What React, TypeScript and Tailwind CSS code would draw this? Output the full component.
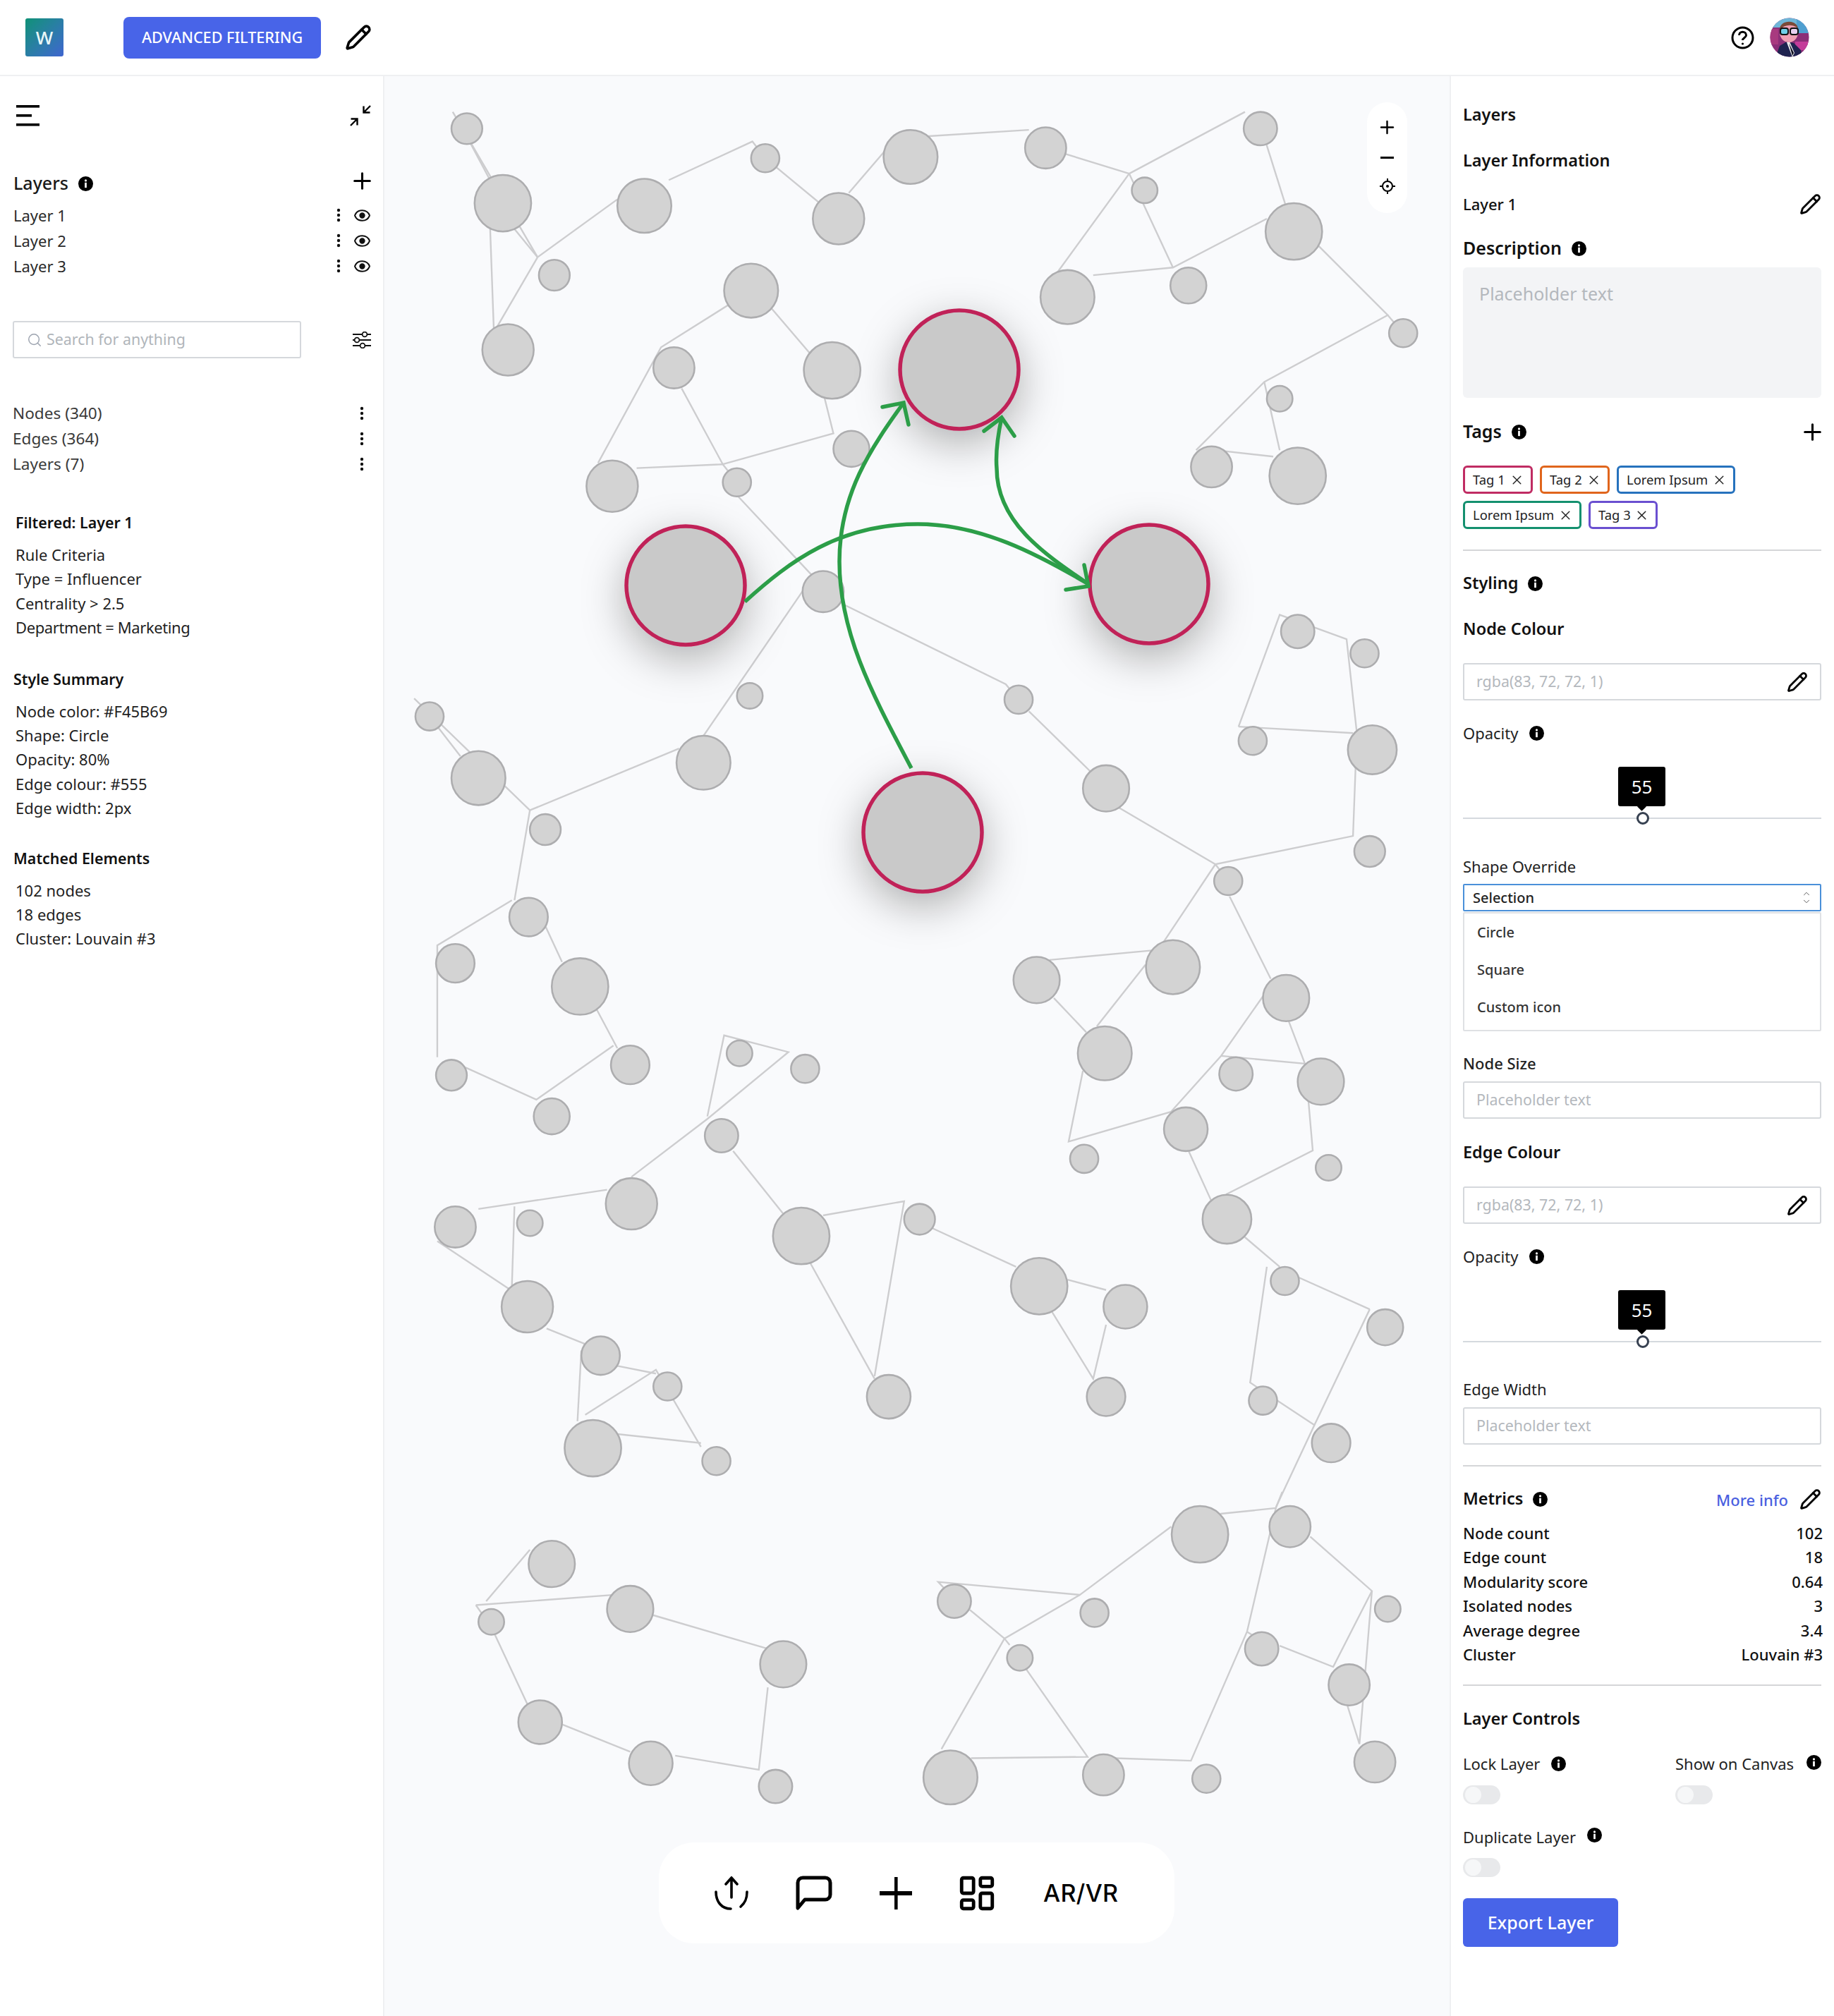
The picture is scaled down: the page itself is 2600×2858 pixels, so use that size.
import { Plus, Pencil, Search, LayoutDashboard, ChevronUp, ChevronDown, X } from "lucide-react";

// graph data, measured in 1426-wide picture units and scaled up in the svg
const nodes: number[][] = [
  [363, 100, 12], [391, 158, 22], [431, 214, 12], [395, 272, 20], [501, 160, 21], [595, 123, 11], [652, 170, 20], [708, 122, 21],
  [813, 115, 16], [890, 148, 10], [980, 100, 13], [1006, 180, 22], [924, 222, 14], [830, 231, 21], [1091, 259, 11],
  [584, 226, 21], [524, 286, 16], [647, 288, 22], [662, 349, 14], [476, 378, 20], [573, 375, 11],
  [995, 310, 10], [942, 363, 16], [1009, 370, 22],
  [640, 460, 16], [583, 541, 10], [792, 544, 11], [860, 613, 18], [547, 593, 21], [334, 557, 11], [372, 605, 21], [424, 645, 12],
  [1009, 491, 13], [1061, 508, 11], [974, 576, 11], [1067, 583, 19], [1065, 662, 12], [955, 685, 11],
  [411, 713, 15], [354, 749, 15], [451, 767, 22], [490, 828, 15], [351, 836, 12], [429, 868, 14],
  [575, 819, 10], [626, 831, 11], [561, 883, 13], [912, 752, 21], [806, 762, 18], [859, 819, 21], [1000, 776, 18], [961, 835, 13],
  [1027, 841, 18], [922, 878, 17], [843, 901, 11], [1033, 908, 10], [954, 948, 19],
  [354, 954, 16], [412, 951, 10], [491, 936, 20], [410, 1016, 20], [623, 961, 22], [715, 948, 12], [808, 1000, 22], [875, 1016, 17],
  [999, 996, 11], [1077, 1032, 14], [691, 1086, 17], [860, 1086, 15], [982, 1089, 11], [1035, 1122, 15], [467, 1054, 15], [519, 1078, 11],
  [461, 1126, 22], [557, 1136, 11],
  [429, 1216, 18], [490, 1251, 18], [382, 1261, 10], [609, 1294, 18], [420, 1339, 17], [506, 1371, 17], [603, 1389, 13],
  [933, 1193, 22], [1003, 1187, 16], [742, 1245, 13], [851, 1254, 11], [793, 1289, 10], [981, 1282, 13], [1079, 1251, 10], [1049, 1310, 16],
  [739, 1382, 21], [858, 1380, 16], [938, 1383, 11], [1069, 1370, 16],
];

const edges: string[] = [
  "352,87 418,200", "365,110 381,140", "381,175 384,258", "418,200 480,155", "418,200 386,255", "395,172 418,200",
  "520,140 585,110 595,123 652,170", "660,150 690,115", "720,106 800,101", "813,115 878,135",
  "878,135 968,87", "984,110 1006,180", "878,135 822,212", "878,135 912,208", "850,214 912,208 985,170",
  "1024,190 1079,245 983,297 930,350", "983,297 995,350", "945,350 990,355", "1079,245 1091,259",
  "584,226 514,270 465,360", "600,240 630,275", "530,302 562,361 648,337 640,305", "495,364 562,361", "573,385 632,448",
  "562,361 573,375", "632,448 545,575", "656,470 782,532 792,544", "800,553 848,600", "870,628 945,672 1052,650 1055,570",
  "945,672 905,732", "945,672 955,685", "956,697 988,761", "963,565 995,478 1047,497 1055,570", "963,565 1052,570",
  "322,543 412,630 400,700", "334,557 358,588", "412,630 528,582", "398,700 340,735 340,822", "424,720 437,748", "464,785 480,815", "477,813 417,855 362,830",
  "550,868 563,805 613,818 550,870 491,915", "570,895 610,945", "372,940 472,925", "400,938 398,1000", "340,965 397,1003", "425,1033 455,1045",
  "452,1050 449,1105", "455,1100 510,1065 545,1125", "480,1115 545,1122", "480,1062 510,1068",
  "640,945 703,934 680,1070", "630,982 680,1072", "725,955 790,985", "830,995 860,1003", "818,1020 850,1072 860,1030",
  "985,985 972,1075 1022,1108 1065,1018", "1007,992 1065,1018", "1022,1108 992,1172",
  // bottom right cluster
  "949,1177 992,1172.6 997,1160", "992,1172.6 969.6,1268.7 926,1369 867,1367", "969.6,1268.7 981,1276",
  "995,1279.6 1036.6,1296 1066.7,1237 1018.7,1194.7", "1066.7,1237 1057,1356 1047.6,1326",
  "910.6,1187 839.7,1240 729.5,1230 737,1238", "839.7,1240 781,1274 732,1360", "781,1274 754,1251.6", "781,1274 785,1279",
  "798,1298 845.6,1366 755,1367",
  "378,1245 412,1205", "370,1248 478,1240", "370,1248 382,1265", "382,1265 410,1325", "505,1255 597,1282", "597,1312 590,1376 525,1365", "435,1340 490,1362",
  // middle right cluster
  "816,746.4 895.8,739", "819.4,776 844.6,802.6", "890.7,750 852.8,798", "842,832.6 830.9,887.6 910.4,864.5 949.4,821 982.9,773.3",
  "949.4,821 1014.6,827 1002,794", "1017.4,856.6 1020.7,894.5 953.3,928.7", "924.2,895 941.7,933.4", "968,962 995,985",
];

const hubs: number[][] = [[1360, 524], [972, 830], [1629, 828], [1308, 1180]];

const tagStyles = [
  { label: "Tag 1", box: "w-[99px] border-[#c02c63]" },
  { label: "Tag 2", box: "w-[99px] border-[#e0651c]" },
  { label: "Lorem Ipsum", box: "w-[168px] border-[#2672bd]" },
];
const tagStyles2 = [
  { label: "Lorem Ipsum", box: "w-[168px] border-[#14906f]" },
  { label: "Tag 3", box: "w-[98px] border-[#6a4fd0]" },
];

const metrics = [
  ["Node count", "102"],
  ["Edge count", "18"],
  ["Modularity score", "0.64"],
  ["Isolated nodes", "3"],
  ["Average degree", "3.4"],
  ["Cluster", "Louvain #3"],
];

function Info({ size = 21 }: { size?: number }) {
  return (
    <svg width={size} height={size} viewBox="0 0 20 20">
      <circle cx="10" cy="10" r="10" fill="#000" />
      <circle cx="10" cy="5.6" r="1.5" fill="#fff" />
      <rect x="8.7" y="8.4" width="2.6" height="7" fill="#fff" />
    </svg>
  );
}

function Dots() {
  return (
    <svg width="6" height="20" viewBox="0 0 6 20">
      <circle cx="3" cy="3" r="2.2" fill="#111" />
      <circle cx="3" cy="10" r="2.2" fill="#111" />
      <circle cx="3" cy="17" r="2.2" fill="#111" />
    </svg>
  );
}

function Eye() {
  return (
    <svg width="25" height="25" viewBox="0 0 24 24" fill="none" stroke="#111" strokeWidth="2">
      <path d="M2.062 12.348a1 1 0 0 1 0-.696 10.75 10.75 0 0 1 19.876 0 1 1 0 0 1 0 .696 10.75 10.75 0 0 1-19.876 0" />
      <circle cx="12" cy="12" r="3" fill="#111" />
    </svg>
  );
}

function LayerRow({ name }: { name: string }) {
  return (
    <div className="flex h-[36px] items-center pl-[19px] pr-[17px] text-[22px] text-[#2a2a2a]">
      <span className="flex-1">{name}</span>
      <span className="mr-[18px] flex"><Dots /></span>
      <Eye />
    </div>
  );
}

function CountRow({ name }: { name: string }) {
  return (
    <div className="flex h-[36px] items-center pl-[18px] pr-[27px] text-[22.6px] text-[#3a3a3a]">
      <span className="flex-1">{name}</span>
      <Dots />
    </div>
  );
}

function Lines({ items }: { items: string[] }) {
  return (
    <div className="mt-[11px] pl-[22px] text-[22px] leading-[34.4px] text-[#1f1f1f]">
      {items.map((t) => (
        <div key={t} className={t.startsWith("Department") ? "tracking-[-0.4px]" : ""}>{t}</div>
      ))}
    </div>
  );
}

function Heading({ children, className = "" }: { children: React.ReactNode; className?: string }) {
  return <div className={"flex h-[34px] items-center gap-[14px] text-[23.5px] font-semibold text-[#111] " + className}>{children}</div>;
}

function Label({ children, className = "" }: { children: React.ReactNode; className?: string }) {
  return <div className={"flex h-[34px] items-center gap-[16px] text-[22px] text-[#222] " + className}>{children}</div>;
}

function Field({ text, pencil, className = "" }: { text: string; pencil?: boolean; className?: string }) {
  return (
    <div className={"flex h-[53px] items-center justify-between rounded-[3px] border-2 border-[#d5d8dc] pl-[17px] pr-[17px] text-[21.4px] text-[#b4b8bd] " + className}>
      <span>{text}</span>
      {pencil && <Pencil size={30} strokeWidth={2.2} className="text-black" />}
    </div>
  );
}

function Slider({ className = "" }: { className?: string }) {
  return (
    <div className={"relative h-[90px] " + className}>
      <div className="absolute left-0 right-0 top-[72px] h-[2px] bg-[#d5d9de]" />
      <div className="absolute left-[220px] top-0 flex h-[56px] w-[67px] items-center justify-center rounded-[3px] bg-black text-[26px] text-white">55</div>
      <div className="absolute left-[249px] top-[52px] h-[9px] w-[9px] rotate-45 bg-black" />
      <div className="absolute left-[246px] top-[64px] h-[18px] w-[18px] rounded-full border-[3px] border-[#374151] bg-white" />
    </div>
  );
}

function Toggle({ className = "" }: { className?: string }) {
  return (
    <div className={"relative h-[27px] w-[53px] rounded-full bg-[#e8e9eb] " + className}>
      <div className="absolute left-[3px] top-[2px] h-[23px] w-[23px] rounded-full bg-[#f6f7f8]" />
    </div>
  );
}

function Tag({ label, box }: { label: string; box: string }) {
  return (
    <div className={"flex h-[40px] items-center justify-between whitespace-nowrap rounded-[6px] border-[3px] pl-[11px] pr-[9px] text-[18.4px] text-[#222] " + box}>
      <span>{label}</span>
      <X size={21} strokeWidth={1.7} className="shrink-0 text-[#222]" />
    </div>
  );
}

function Avatar() {
  return (
    <svg width="56" height="56" viewBox="0 0 56 56">
      <defs>
        <clipPath id="av">
          <circle cx="28" cy="28" r="27.5" />
        </clipPath>
      </defs>
      <g clipPath="url(#av)">
        <rect width="56" height="56" fill="#8c2f78" />
        <rect width="56" height="14" fill="#6fb6d8" />
        <rect x="38" y="0" width="18" height="22" fill="#4f9fd0" />
        <rect x="0" y="16" width="12" height="22" fill="#a83a7f" />
        <path d="M36 34h20v12H36z" fill="#c43c9a" />
        <path d="M8 56 L14 40 L24 34 L34 36 L44 46 L46 56z" fill="#1f2350" />
        <path d="M24 35 L32 56 L35 50 L28 34z" fill="#f2f2f2" />
        <path d="M27 36 L32 54 L34 50z" fill="#0d0d20" />
        <ellipse cx="27" cy="21" rx="13" ry="14" fill="#f0a0b4" />
        <path d="M14 17 C14 3 38 2 40 15 C32 9 22 9 14 17z" fill="#7a4a38" />
        <rect x="15" y="15" width="11" height="9" rx="3" fill="#6fd0e8" stroke="#111" strokeWidth="2" />
        <rect x="29" y="15" width="11" height="9" rx="3" fill="#e8d0f0" stroke="#111" strokeWidth="2" />
      </g>
    </svg>
  );
}

function Graph() {
  return (
    <svg className="block h-full w-full" viewBox="545 108 1510 2750">
      <defs>
        <filter id="hub" x="-100%" y="-100%" width="300%" height="300%">
          <feDropShadow dx="0" dy="18" stdDeviation="30" floodColor="#000" floodOpacity="0.3" />
        </filter>
      </defs>
      <g transform="scale(1.8233)">
        {edges.map((p, i) => (
          <polyline key={i} points={p} fill="none" stroke="#cdcdcf" strokeWidth="1.3" />
        ))}
        {nodes.map(([x, y, r], i) => (
          <circle key={i} cx={x} cy={y} r={r} fill="#d3d3d3" stroke="#adadaf" strokeWidth="1.4" />
        ))}
      </g>
      {hubs.map(([x, y], i) => (
        <circle key={i} cx={x} cy={y} r="84" fill="#c9c9c9" stroke="#c02258" strokeWidth="5.5" filter="url(#hub)" />
      ))}
      <g fill="none" stroke="#2c9e48" strokeWidth="5.5">
        <path d="M1292 1089 C1240 990 1190 900 1190 796 C1190 700 1235 635 1281 571" />
        <path d="M1056 853 C1120 795 1190 743 1301 743 C1390 743 1470 785 1543 828" />
        <path d="M1543 828 C1480 785 1413 740 1413 664 C1411 640 1415 615 1420 592" />
        <path d="M1251 577 L1281 571 L1288 602" strokeLinecap="round" />
        <path d="M1511 836 L1543 831 L1537 801" strokeLinecap="round" />
        <path d="M1395 611 L1420 592 L1438 618" strokeLinecap="round" />
      </g>
    </svg>
  );
}

export default function App() {
  return (
    <div className="flex h-[2858px] w-[2600px] flex-col bg-white font-['Noto_Sans',sans-serif]">
      {/* top bar */}
      <header className="flex h-[108px] shrink-0 items-center border-b-2 border-[#eff0f2] pl-[36px] pr-[36px]">
        <div className="flex h-[54px] w-[54px] items-center justify-center rounded-[3px] bg-linear-to-br from-[#0e9176] to-[#3f64cf] text-[26px] font-medium text-[#e8f7f7]">W</div>
        <button className="ml-[85px] h-[59px] w-[280px] rounded-[8px] bg-[#4864e8] text-[21.6px] font-medium text-white">ADVANCED FILTERING</button>
        <Pencil size={38} strokeWidth={2.3} className="ml-[34px] text-black" />
        <div className="flex-1" />
        <svg width="33" height="33" viewBox="0 0 33 33" fill="none" stroke="#000" strokeWidth="3">
          <circle cx="16.5" cy="16.5" r="14.5" />
          <path d="M11.5 13 C11.5 6.5 21.5 6.5 21.5 13 C21.5 16.5 16.5 16.5 16.5 20" />
          <circle cx="16.5" cy="25" r="1.6" fill="#000" stroke="none" />
        </svg>
        <div className="ml-[22px] mr-[-1px] flex"><Avatar /></div>
      </header>

      <div className="flex min-h-0 flex-1">
        {/* left sidebar */}
        <aside className="w-[545px] shrink-0 border-r-2 border-[#eff0f2] pt-[41px]">
          <div className="flex items-start justify-between pl-[23px] pr-[17px]">
            <svg width="33" height="30" viewBox="0 0 33 30" fill="#000">
              <rect width="33" height="3.6" />
              <rect y="13" width="22" height="3.6" />
              <rect y="26" width="33" height="3.6" />
            </svg>
            <svg width="30" height="30" viewBox="0 0 30 30" fill="none" stroke="#000" strokeWidth="2.4">
              <path d="M29 1 L19.5 10.5 M19.5 1.5 V10.5 H28.5" />
              <path d="M1 29 L10.5 19.5 M1.5 19.5 H10.5 V28.5" />
            </svg>
          </div>

          <div className="mt-[64px] flex h-[34px] items-center pl-[19px] pr-[17px]">
            <span className="text-[25px] font-medium text-[#1a1a1a]">Layers</span>
            <span className="ml-[14px] flex flex-1"><Info /></span>
            <Plus size={37} strokeWidth={2} className="mb-[8px] mr-[-6px] text-black" />
          </div>
          <div className="mt-[10px]">
            <LayerRow name="Layer 1" />
            <LayerRow name="Layer 2" />
            <LayerRow name="Layer 3" />
          </div>

          <div className="mt-[60px] flex items-center pl-[18px] pr-[17px]">
            <div className="flex h-[53px] w-[409px] items-center rounded-[3px] border-2 border-[#d5d8dc] pl-[18px] text-[21.4px] text-[#b0b5ba]">
              <Search size={22} strokeWidth={1.6} className="text-[#9ca3af]" />
              <span className="ml-[6px]">Search for anything</span>
            </div>
            <div className="flex-1" />
            <svg width="26" height="24" viewBox="0 0 26 24" fill="none" stroke="#111" strokeWidth="1.8">
              <path d="M0 4H13 M21 4H26 M0 12H2 M10 12H26 M0 20H10 M18 20H26" />
              <circle cx="17" cy="4" r="3.4" />
              <circle cx="6" cy="12" r="3.4" />
              <circle cx="14" cy="20" r="3.4" />
            </svg>
          </div>

          <div className="mt-[60px]">
            <CountRow name="Nodes (340)" />
            <CountRow name="Edges (364)" />
            <CountRow name="Layers (7)" />
          </div>

          <div className="mt-[48px] flex h-[34px] items-center pl-[22px] text-[21.4px] font-semibold text-[#111]">Filtered: Layer 1</div>
          <Lines items={["Rule Criteria", "Type = Influencer", "Centrality > 2.5", "Department = Marketing"]} />

          <div className="mt-[39px] flex h-[34px] items-center pl-[19px] text-[21.4px] font-semibold text-[#111]">Style Summary</div>
          <Lines items={["Node color: #F45B69", "Shape: Circle", "Opacity: 80%", "Edge colour: #555", "Edge width: 2px"]} />

          <div className="mt-[37px] flex h-[34px] items-center pl-[19px] text-[21.4px] font-semibold text-[#111]">Matched Elements</div>
          <Lines items={["102 nodes", "18 edges", "Cluster: Louvain #3"]} />
        </aside>

        {/* canvas */}
        <main className="relative min-w-0 flex-1 bg-[#f9fafc]">
          <Graph />
          <div className="absolute left-[1393px] top-[37px] flex h-[157px] w-[57px] flex-col items-center rounded-full bg-white pt-[21px]">
            <Plus size={29} strokeWidth={2} className="text-black" />
            <div className="mt-[27px] h-[3px] w-[19px] bg-black" />
            <svg className="mt-[28px]" width="22" height="22" viewBox="0 0 22 22" fill="none" stroke="#000" strokeWidth="2">
              <circle cx="11" cy="11" r="7" />
              <circle cx="11" cy="11" r="2" fill="#000" stroke="none" />
              <path d="M11 0V4 M11 18V22 M0 11H4 M18 11H22" />
            </svg>
          </div>
          <div className="absolute left-[389px] top-[2504px] flex h-[143px] w-[731px] items-center rounded-[50px] bg-white pl-[79px]">
            <svg width="48" height="48" viewBox="0 0 48 48" fill="none" stroke="#000" strokeWidth="3.6" strokeLinecap="round">
              <path d="M24 2V30 M16 11L24 2L32 11" />
              <path d="M2 22C2 36 10 46 23 46" />
              <path d="M46 22C46 31 44 37 37 43" />
            </svg>
            <svg className="ml-[67px]" width="52" height="50" viewBox="0 0 52 50" fill="none" stroke="#000" strokeWidth="5" strokeLinejoin="round">
              <path d="M3 46V10a7 7 0 0 1 7-7H42a7 7 0 0 1 7 7V27a7 7 0 0 1-7 7H13z" />
            </svg>
            <svg className="ml-[67px]" width="46" height="46" viewBox="0 0 46 46" fill="#000">
              <rect x="21" y="0" width="4.6" height="46" />
              <rect x="0" y="20" width="46" height="6" />
            </svg>
            <LayoutDashboard size={58} strokeWidth={2} className="ml-[63px] text-black" />
            <span className="ml-[65px] font-['Inter',sans-serif] text-[34px] font-medium tracking-[0.3px] text-black">AR/VR</span>
          </div>
        </main>

        {/* right sidebar */}
        <aside className="flex w-[545px] shrink-0 flex-col border-l-2 border-[#eff0f2] pl-[17px] pr-[18px] pt-[38px]">
          <Heading>Layers</Heading>
          <Heading className="mt-[31px] text-[23.1px]">Layer Information</Heading>
          <div className="mt-[27px] flex h-[34px] items-center justify-between text-[22px] font-medium text-[#111]">
            <span>Layer 1</span>
            <Pencil size={31} strokeWidth={2.2} className="text-black" />
          </div>
          <Heading className="mt-[29px] gap-[12px] text-[25px] font-medium">Description <Info /></Heading>
          <div className="mt-[10px] h-[185px] rounded-[6px] bg-[#f3f4f6] pl-[23px] pt-[19px] text-[25px] text-[#b4b8bd]">Placeholder text</div>
          <Heading className="mt-[31px] gap-[12px] text-[25px] font-medium">
            <span>Tags</span>
            <Info />
            <span className="flex-1" />
            <Plus size={37} strokeWidth={2} className="mr-[-6px] text-black" />
          </Heading>
          <div className="mt-[31px] flex gap-[10px]">
            {tagStyles.map((t) => <Tag key={t.box} {...t} />)}
          </div>
          <div className="mt-[10px] flex gap-[10px]">
            {tagStyles2.map((t) => <Tag key={t.box} {...t} />)}
          </div>
          <div className="mt-[29px] h-[2px] shrink-0 bg-[#d5d6d8]" />

          <Heading className="mt-[29px] gap-[12px]">Styling <Info /></Heading>
          <Heading className="mt-[31px]">Node Colour</Heading>
          <Field className="mt-[31px]" text="rgba(83, 72, 72, 1)" pencil />
          <Label className="mt-[29px]">Opacity <Info /></Label>
          <Slider className="mt-[31px]" />
          <Label className="mt-[34px]">Shape Override</Label>
          <div className="mt-[8px] flex h-[39px] items-center justify-between rounded-[2px] border-2 border-[#4a90d9] pl-[12px] pr-[12px] text-[20px] font-medium text-[#222]">
            <span>Selection</span>
            <span className="flex flex-col text-[#555]">
              <ChevronUp size={14} strokeWidth={1.6} className="mb-[-3px]" />
              <ChevronDown size={14} strokeWidth={1.6} />
            </span>
          </div>
          <div className="mt-[1px] h-[169px] rounded-[2px] border-2 border-[#dfe1e4] pl-[18px] text-[20px] font-medium text-[#333]">
            <div className="flex h-[53px] items-center">Circle</div>
            <div className="flex h-[53px] items-center">Square</div>
            <div className="flex h-[53px] items-center">Custom icon</div>
          </div>
          <Label className="mt-[28px] font-medium">Node Size</Label>
          <Field className="mt-[9px]" text="Placeholder text" />
          <Heading className="mt-[31px]">Edge Colour</Heading>
          <Field className="mt-[31px]" text="rgba(83, 72, 72, 1)" pencil />
          <Label className="mt-[29px]">Opacity <Info /></Label>
          <Slider className="mt-[31px]" />
          <Label className="mt-[33px]">Edge Width</Label>
          <Field className="mt-[9px]" text="Placeholder text" />
          <div className="mt-[29px] h-[2px] shrink-0 bg-[#d5d6d8]" />

          <Heading className="mt-[29px]">
            <span>Metrics</span>
            <Info />
            <span className="flex-1" />
            <span className="mr-[2px] mt-[2px] text-[22px] font-medium text-[#4a5fe0]">More info</span>
            <Pencil size={31} strokeWidth={2.2} className="text-black" />
          </Heading>
          <div className="mt-[14px] mr-[-2px] text-[22px] font-medium leading-[34.4px] text-[#111]">
            {metrics.map(([k, v]) => (
              <div key={k} className="flex justify-between">
                <span>{k}</span>
                <span>{v}</span>
              </div>
            ))}
          </div>
          <div className="mt-[26px] h-[2px] shrink-0 bg-[#d5d6d8]" />

          <Heading className="mt-[29px]">Layer Controls</Heading>
          <div className="mt-[30px] flex">
            <div className="w-[301px]">
              <Label>Lock Layer <Info /></Label>
              <Toggle className="mt-[14px]" />
            </div>
            <div className="flex-1">
              <Label className="justify-between">Show on Canvas <span className="mt-[-4px] flex"><Info /></span></Label>
              <Toggle className="mt-[14px]" />
            </div>
          </div>
          <Label className="mt-[29px]">Duplicate Layer <span className="mt-[-6px] flex"><Info /></span></Label>
          <Toggle className="mt-[13px]" />
          <button className="mt-[30px] h-[69px] w-[220px] rounded-[6px] bg-[#4864e8] text-[25px] font-medium text-white">Export Layer</button>
        </aside>
      </div>
    </div>
  );
}
